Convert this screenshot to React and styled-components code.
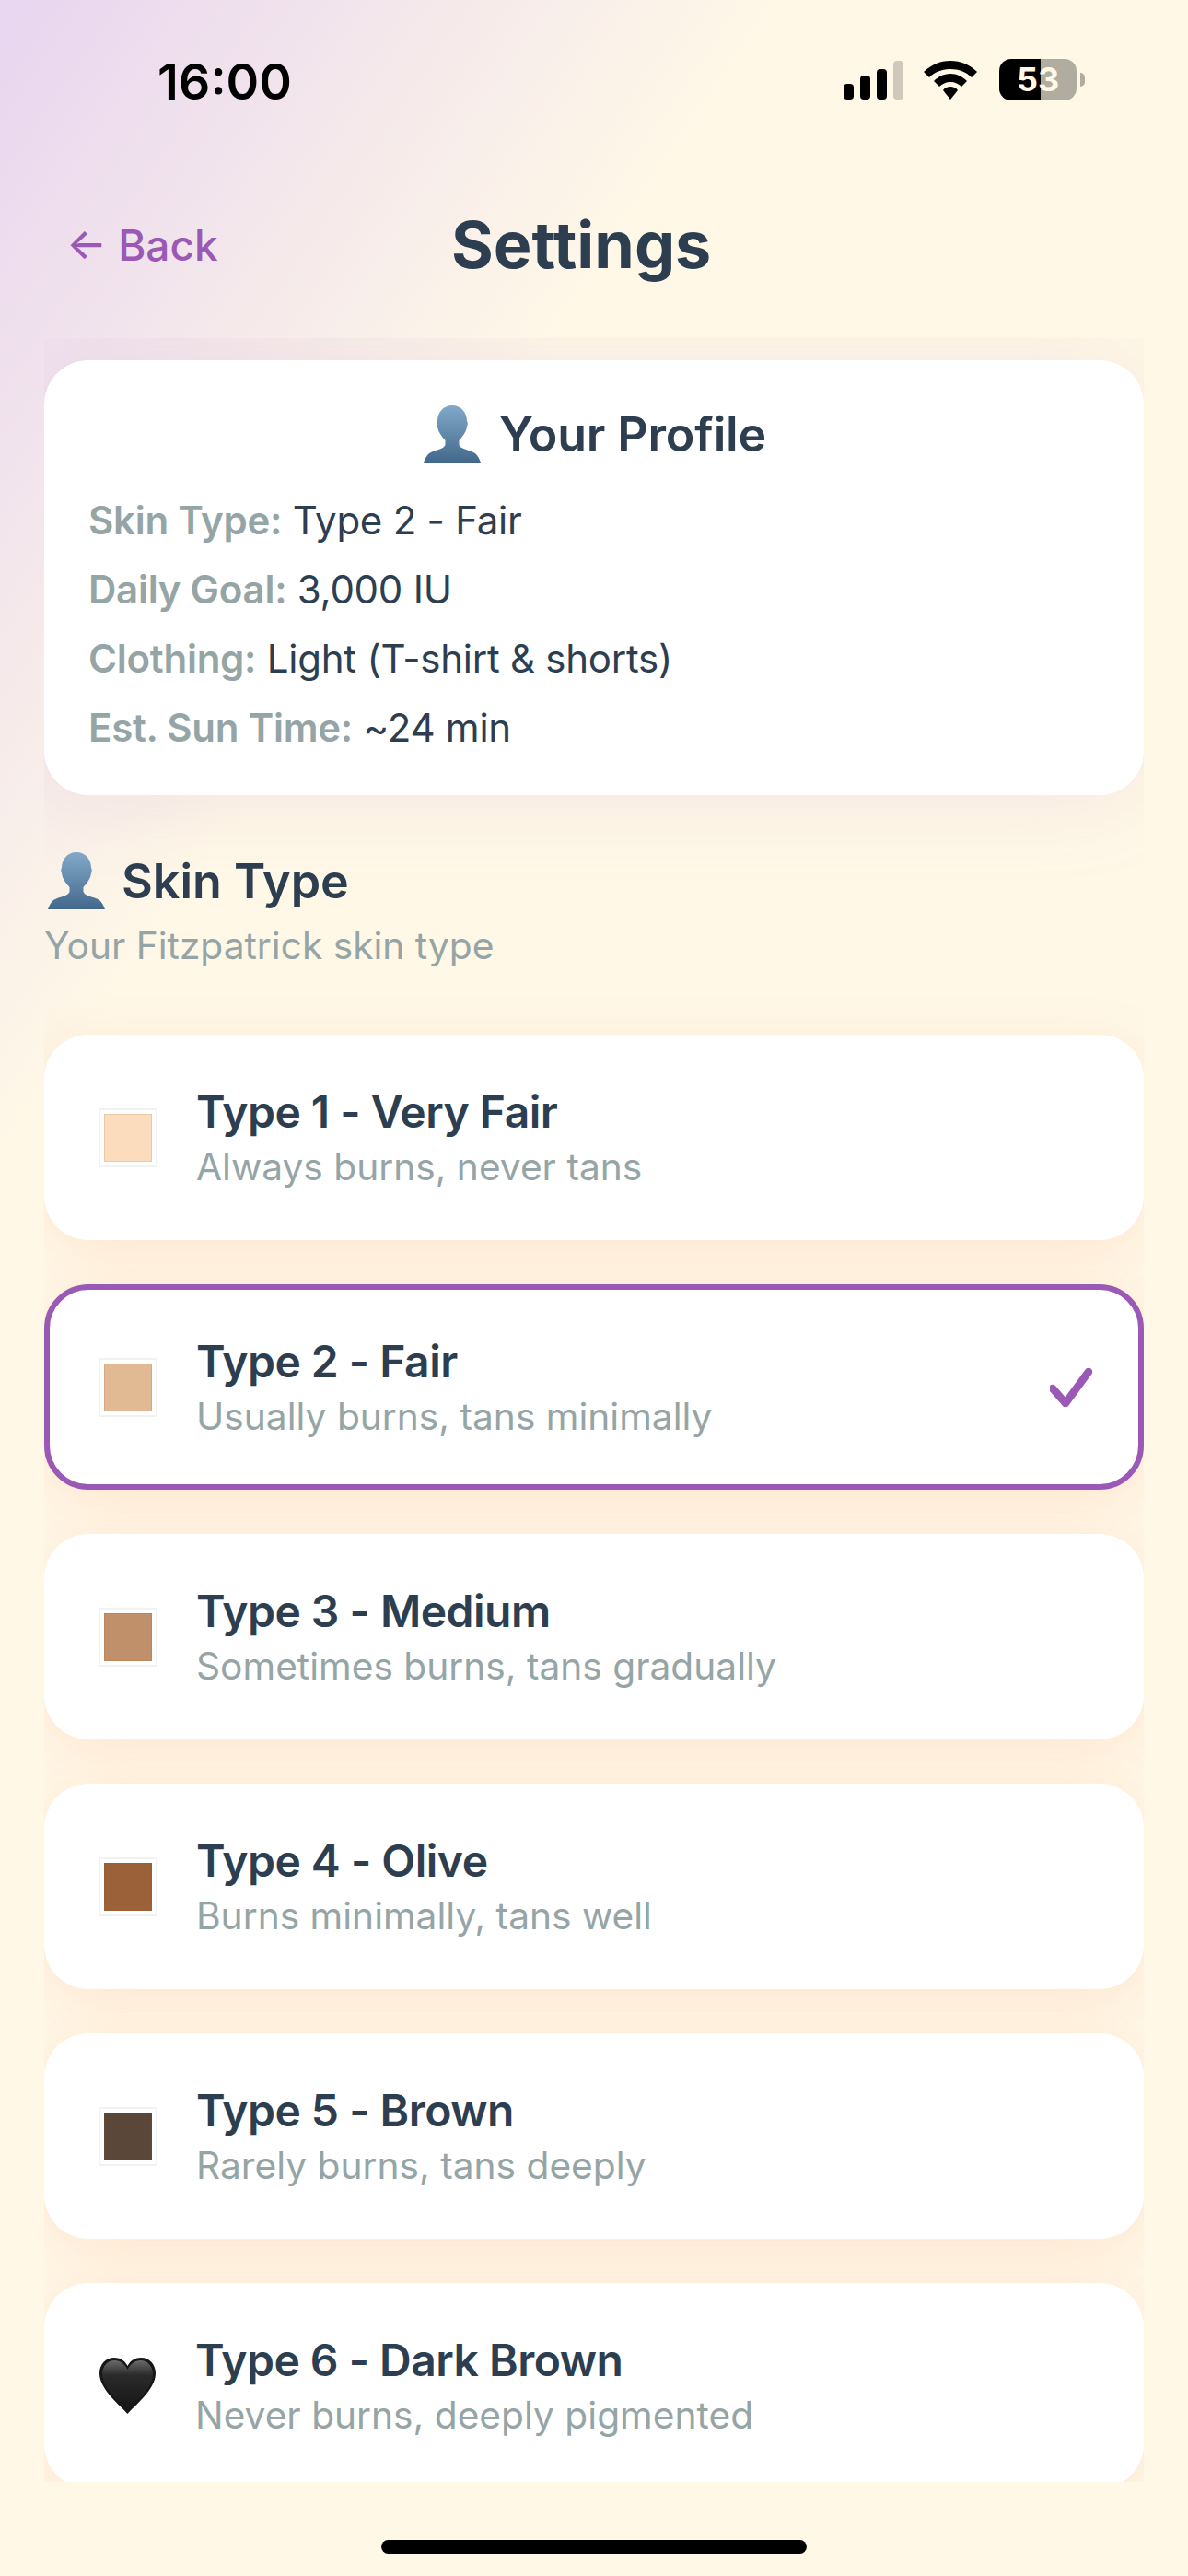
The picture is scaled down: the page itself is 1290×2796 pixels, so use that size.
import styled, { createGlobalStyle } from "styled-components";

const skinTypes = [
  { name: "Type 1 - Very Fair", hint: "Always burns, never tans", color: "#fbdcbd" },
  { name: "Type 2 - Fair", hint: "Usually burns, tans minimally", color: "#e1b993", selected: true },
  { name: "Type 3 - Medium", hint: "Sometimes burns, tans gradually", color: "#bf9069" },
  { name: "Type 4 - Olive", hint: "Burns minimally, tans well", color: "#9b6239" },
  { name: "Type 5 - Brown", hint: "Rarely burns, tans deeply", color: "#5b463a" },
  { name: "Type 6 - Dark Brown", hint: "Never burns, deeply pigmented", heart: true },
];

const profileRows = [
  ["Skin Type:", "Type 2 - Fair"],
  ["Daily Goal:", "3,000 IU"],
  ["Clothing:", "Light (T-shirt & shorts)"],
  ["Est. Sun Time:", "~24 min"],
];

function PersonIcon({ id }) {
  return (
    <svg width="62" height="62" viewBox="0 0 62 62">
      <defs>
        <linearGradient id={id} x1="0" y1="0" x2="0" y2="1">
          <stop offset="0" stopColor="#82a9c9" />
          <stop offset="1" stopColor="#43688d" />
        </linearGradient>
      </defs>
      <path
        fill={`url(#${id})`}
        d="M31 0C41 0 47 8 47 17C48 18 48 21 47 23C46 30 41 35 38.5 38L38.5 43C40 47 47 48 52 50C58 52 60 57 62 62L0 62C2 57 4 52 10 50C15 48 22 47 23.5 43L23.5 38C21 35 16 30 15 23C14 21 14 18 15 17C15 8 21 0 31 0Z"
      />
    </svg>
  );
}

export default function App() {
  return (
    <>
      <GlobalStyle />
      <Screen>
        <StatusBar>
          <Clock>16:00</Clock>
          <StatusIcons>
            <svg width="66" height="42" viewBox="0 0 66 42">
              <rect x="0" y="25" width="11" height="17" rx="4" fill="#000" />
              <rect x="18" y="16" width="11" height="26" rx="4" fill="#000" />
              <rect x="36" y="9" width="11" height="33" rx="4" fill="#000" />
              <rect x="54" y="0" width="11" height="42" rx="4" fill="#cfc8bb" />
            </svg>
            <svg width="58" height="42" viewBox="0 0 58 42">
              <path
                fill="#000"
                d="M29 0C40 0 50 4 58 12L52 18C46 12 38 9 29 9C20 9 12 12 6 18L0 12C8 4 18 0 29 0Z"
              />
              <path
                fill="#000"
                d="M29 14C36 14 42 17 47 22L41 28C38 25 34 23 29 23C24 23 20 25 17 28L11 22C16 17 22 14 29 14Z"
              />
              <path fill="#000" d="M29 28C32 28 35 29 37 32L29 42L21 32C23 29 26 28 29 28Z" />
            </svg>
            <Battery>
              <BatteryLevel>53</BatteryLevel>
              <BatteryNub />
            </Battery>
          </StatusIcons>
        </StatusBar>

        <Header>
          <BackButton>← Back</BackButton>
          <Title>Settings</Title>
        </Header>

        <Panel>
          <ProfileCard>
            <ProfileTitle>
              <PersonIcon id="personA" />
              Your Profile
            </ProfileTitle>
            {profileRows.map(([label, value]) => (
              <ProfileRow key={label}>
                <strong>{label}</strong> {value}
              </ProfileRow>
            ))}
          </ProfileCard>

          <SectionTitle>
            <PersonIcon id="personB" />
            Skin Type
          </SectionTitle>
          <SectionHint>Your Fitzpatrick skin type</SectionHint>

          <OptionList>
            {skinTypes.map((type) => (
              <Option key={type.name} $selected={type.selected}>
                {type.heart ? (
                  <HeartMark width="61" height="61" viewBox="0 0 61 61">
                    <defs>
                      <linearGradient id="heartFill" x1="0" y1="0" x2="0" y2="1">
                        <stop offset="0" stopColor="#6a6a6a" />
                        <stop offset="0.3" stopColor="#2a2a2a" />
                        <stop offset="1" stopColor="#161616" />
                      </linearGradient>
                    </defs>
                    <path
                      fill="#161616"
                      d="M30.5 61C24 53 0 35 0 17C0 7 7 0 16 0C22 0 27.5 3 30.5 9C33.5 3 39 0 45 0C54 0 61 7 61 17C61 35 37 53 30.5 61Z"
                    />
                    <path
                      fill="url(#heartFill)"
                      d="M30.5 57C24 50 3 34 3 18C3 9 9 3 16.5 3C22.5 3 27.5 7 30.5 13C33.5 7 38.5 3 44.5 3C52 3 58 9 58 18C58 34 37 50 30.5 57Z"
                    />
                  </HeartMark>
                ) : (
                  <Swatch>
                    <SwatchFill $color={type.color} />
                  </Swatch>
                )}
                <OptionText>
                  <OptionName>{type.name}</OptionName>
                  <OptionHint>{type.hint}</OptionHint>
                </OptionText>
                {type.selected && (
                  <CheckMark width="48" height="42" viewBox="0 0 48 42">
                    <path d="M3 22L17 38L42 4" />
                  </CheckMark>
                )}
              </Option>
            ))}
          </OptionList>
        </Panel>

        <HomeArea>
          <HomeBar />
        </HomeArea>
      </Screen>
    </>
  );
}

const GlobalStyle = createGlobalStyle`
  body {
    margin: 0;
    font-family: Inter, "Liberation Sans", sans-serif;
  }
`;

const Screen = styled.div`
  width: 1290px;
  height: 2796px;
  overflow: hidden;
  display: flex;
  flex-direction: column;
  background: linear-gradient(124deg, #e8d5f0 0%, #fff8e7 27%);
`;

const StatusBar = styled.div`
  height: 170px;
  box-sizing: border-box;
  padding: 58px 112px 0 171px;
  display: flex;
  justify-content: space-between;
  align-items: flex-start;
`;

const Clock = styled.div`
  font-size: 54px;
  line-height: 62px;
  font-weight: 600;
  color: #000;
`;

const StatusIcons = styled.div`
  display: flex;
  align-items: center;
  gap: 21px;
  margin-top: 6px;

  svg:nth-child(2) {
    margin-right: 3px;
  }
`;

const Battery = styled.div`
  display: flex;
  align-items: center;
`;

const BatteryLevel = styled.div`
  width: 84px;
  height: 45px;
  border-radius: 13px;
  background: linear-gradient(90deg, #000 0 54%, #b0ac9f 54% 100%);
  color: #fff8e7;
  font-size: 36px;
  font-weight: 700;
  line-height: 45px;
  text-align: center;
`;

const BatteryNub = styled.div`
  width: 5px;
  height: 15px;
  margin-left: 4px;
  border-radius: 0 5px 5px 0;
  background: #b0ac9f;
`;

const Header = styled.div`
  height: 197px;
  box-sizing: border-box;
  padding: 0 48px 6px 72px;
  display: flex;
  align-items: center;
`;

const BackButton = styled.div`
  width: 418px;
  font-size: 46px;
  font-weight: 500;
  color: #9b59b6;
`;

const Title = styled.h1`
  margin: 0;
  font-size: 70px;
  font-weight: 700;
  color: #2c3e50;
`;

const Panel = styled.div`
  width: 1194px;
  height: 2327px;
  margin-left: 48px;
  box-sizing: border-box;
  padding-top: 24px;
  overflow: hidden;
`;

const Card = styled.div`
  background: #fff;
  border-radius: 48px;
  box-shadow: 0 12px 60px rgba(240, 120, 70, 0.14);
`;

const ProfileCard = styled(Card)`
  height: 472px;
  box-sizing: border-box;
  padding: 48px 48px 0;
  box-shadow: 0 4px 100px rgba(155, 89, 182, 0.12);
`;

const ProfileTitle = styled.div`
  display: flex;
  justify-content: center;
  align-items: center;
  gap: 20px;
  height: 64px;
  margin-bottom: 24px;
  font-size: 52px;
  letter-spacing: -0.2px;
  font-weight: 600;
  color: #2c3e50;

  svg {
    margin-left: 2px;
  }
`;

const ProfileRow = styled.div`
  font-size: 42px;
  line-height: 75px;
  letter-spacing: -0.25px;
  color: #2c3e50;

  strong {
    font-weight: 600;
    color: #95a5a6;
  }
`;

const SectionTitle = styled.div`
  display: flex;
  align-items: center;
  gap: 18px;
  margin: 60px 0 0 4px;
  height: 66px;
  font-size: 52px;
  font-weight: 600;
  color: #2c3e50;
`;

const SectionHint = styled.div`
  margin-top: 14px;
  font-size: 40.7px;
  line-height: 48px;
  color: #95a5a6;
`;

const OptionList = styled.div`
  display: flex;
  flex-direction: column;
  gap: 48px;
  margin-top: 72px;
`;

const Option = styled(Card)`
  flex: none;
  height: 223px;
  box-sizing: border-box;
  display: flex;
  align-items: center;
  gap: 42px;
  border: ${(p) => (p.$selected ? "6px solid #9b59b6" : "none")};
  padding: ${(p) => (p.$selected ? "0 48px 0 53px" : "0 54px 0 59px")};
`;

const Swatch = styled.div`
  flex: none;
  width: 64px;
  height: 64px;
  box-sizing: border-box;
  display: flex;
  align-items: center;
  justify-content: center;
  border: 2px solid #f2f2f2;
  background: #fff;
`;

const SwatchFill = styled.div`
  width: 52px;
  height: 52px;
  background: ${(p) => p.$color};
  box-shadow: inset 0 0 0 1px rgba(150, 80, 30, 0.14);
`;

const HeartMark = styled.svg`
  flex: none;
  margin: 0 1px;
`;

const OptionText = styled.div`
  flex: 1;
  min-width: 0;
`;

const OptionName = styled.div`
  font-size: 48px;
  line-height: 60px;
  letter-spacing: -0.5px;
  font-weight: 600;
  color: #2c3e50;
`;

const OptionHint = styled.div`
  margin-top: 5px;
  font-size: 40.7px;
  line-height: 50px;
  color: #95a5a6;
`;

const CheckMark = styled.svg`
  flex: none;
  fill: none;
  stroke: #9b59b6;
  stroke-width: 8.5;
  stroke-linecap: round;
  stroke-linejoin: round;
`;

const HomeArea = styled.div`
  flex: 1;
  display: flex;
  justify-content: center;
  padding-top: 63px;
`;

const HomeBar = styled.div`
  width: 462px;
  height: 15px;
  border-radius: 8px;
  background: #000;
`;
